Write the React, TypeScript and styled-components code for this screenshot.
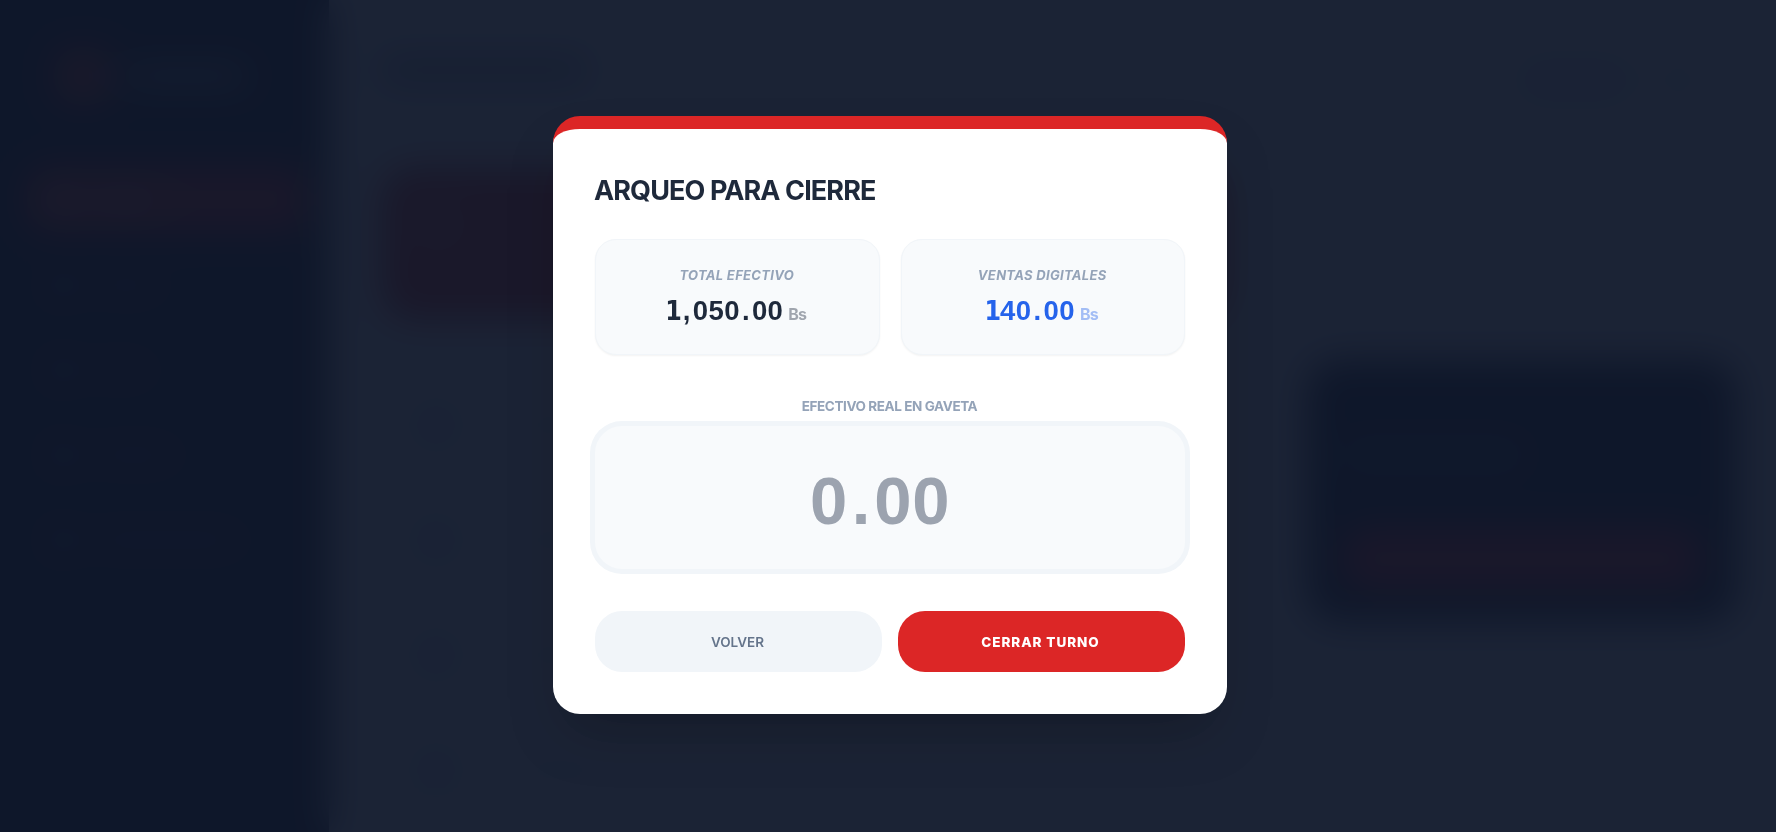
import React from "react";
import styled, { createGlobalStyle } from "styled-components";

const GlobalStyle = createGlobalStyle`
  * { box-sizing: border-box; }
  body { margin: 0; overflow: hidden; font-family: Inter, "Liberation Sans", sans-serif; }
  button, input { font-family: inherit; border: 0; margin: 0; }
`;

const Page = styled.div`
  position: relative;
  display: flex;
  width: 100vw;
  height: 100vh;
  overflow: hidden;
  background: #f8fafc;
`;

const Sidebar = styled.aside`
  display: flex;
  flex-direction: column;
  flex: none;
  width: 329px;
  padding: 49px 21px 0 27px;
  background: #0f172a;
`;

const Brand = styled.div`
  display: flex;
  align-items: center;
  gap: 16px;
  height: 54px;
  padding-left: 29px;
  margin-bottom: 64px;
`;

const BrandMark = styled.div`
  width: 54px;
  height: 54px;
  border-radius: 14px;
  background: #e23a3a;
`;

const Block = styled.div<{ $w: number; $h: number; $color: string; $round?: number }>`
  flex: none;
  width: ${(p) => p.$w}px;
  height: ${(p) => p.$h}px;
  border-radius: ${(p) => p.$round ?? 4}px;
  background: ${(p) => p.$color};
`;

const NavItem = styled.div<{ $active?: boolean }>`
  display: flex;
  align-items: center;
  gap: 18px;
  height: 65px;
  margin-bottom: 20px;
  padding-left: 22px;
  border-radius: 20px;
  background: ${(p) => (p.$active ? "#dc2626" : "transparent")};
`;

const Main = styled.main`
  display: flex;
  flex: 1;
  justify-content: space-between;
  padding: 56px 39px 0 53px;
`;

const Column = styled.section<{ $w: number }>`
  display: flex;
  flex-direction: column;
  flex: none;
  width: ${(p) => p.$w}px;
`;

const Hero = styled.div`
  flex: none;
  height: 152px;
  margin: 84px 0 47px;
  padding: 36px;
  border-radius: 30px;
  background: #dc2626;
`;

const Row = styled.div`
  display: flex;
  flex: none;
  align-items: center;
  gap: 54px;
  height: 115px;
  padding-left: 29px;
`;

const Session = styled.div`
  display: flex;
  justify-content: flex-end;
  gap: 20px;
  height: 60px;
  padding-right: 34px;
`;

const Summary = styled.div`
  display: flex;
  flex-direction: column;
  justify-content: space-between;
  height: 262px;
  margin-top: 244px;
  padding: 82px 36px 32px;
  border-radius: 32px;
  background: #0f172a;
`;

const Overlay = styled.div`
  position: absolute;
  inset: 0;
  display: flex;
  align-items: center;
  justify-content: center;
  padding: 0 0 2px 4px;
  background: rgba(15, 23, 42, 0.95);
  backdrop-filter: blur(18px);
`;

const Modal = styled.div`
  display: flex;
  flex-direction: column;
  width: 674px;
  height: 598px;
  padding: 41px 42px 42px;
  border-top: 13px solid #dc2626;
  border-radius: 27px;
  background: #fff;
  box-shadow: 0 28px 56px -13px rgba(0, 0, 0, 0.25);
`;

const Title = styled.h2`
  margin: 0 0 0 -1px;
  height: 42px;
  line-height: 42px;
  font-size: 27px;
  font-weight: 700;
  letter-spacing: -0.9px;
  color: #1e293b;
`;

const Stats = styled.div`
  display: grid;
  grid-template-columns: 1fr 1fr;
  gap: 21px;
  margin-top: 27px;
`;

const StatCard = styled.div`
  display: flex;
  flex-direction: column;
  align-items: center;
  height: 116px;
  padding: 26px 1px 0 0;
  border: 1px solid #f1f5f9;
  border-radius: 21px;
  background: #f8fafc;
  box-shadow: 0 1px 2px rgba(0, 0, 0, 0.05);
`;

const StatLabel = styled.div`
  height: 20px;
  line-height: 19px;
  font-size: 13px;
  font-weight: 700;
  font-style: italic;
  letter-spacing: 0.32px;
  color: #94a3b8;
`;

const Amount = styled.div<{ $color: string }>`
  display: flex;
  align-items: baseline;
  height: 34px;
  margin: 8px 2px 0 0;
  line-height: 34px;
  font-family: "Liberation Sans", Arial, sans-serif;
  font-size: 27.5px;
  font-weight: 700;
  letter-spacing: 0.4px;
  color: ${(p) => p.$color};
`;

const One = styled.span`
  font-family: "DejaVu Sans Condensed", "DejaVu Sans", sans-serif;
  font-stretch: condensed;
  font-size: 26.5px;
  letter-spacing: -1.1px;
`;

const Point = styled.span`
  padding: 0 2px;
`;

const Comma = styled.span`
  padding: 0 2px;
`;

const Currency = styled.span`
  margin-left: 5px;
  font-family: Inter, sans-serif;
  font-size: 16px;
  font-weight: 700;
  letter-spacing: -0.8px;
  opacity: 0.4;
`;

const FieldLabel = styled.label`
  height: 20px;
  margin: 41px 1px 0 0;
  line-height: 20px;
  font-size: 13.5px;
  font-weight: 700;
  letter-spacing: -0.4px;
  text-align: center;
  color: #94a3b8;
`;

const Field = styled.div`
  display: flex;
  align-items: center;
  justify-content: center;
  flex: none;
  height: 143px;
  margin-top: 10px;
  padding: 6px 20px 0 0;
  border-radius: 27px;
  background: #f8fafc;
  box-shadow: 0 0 0 5px #f1f5f9;
  font-family: "Liberation Sans", Arial, sans-serif;
  font-size: 67px;
  font-weight: 700;
  letter-spacing: 0.7px;
  color: #9ca3af;
`;

const FieldPoint = styled.span`
  padding: 0 3px 0 4px;
`;

const Actions = styled.div`
  display: grid;
  grid-template-columns: 1fr 1fr;
  gap: 16px;
  margin-top: 42px;
`;

const Button = styled.button<{ $primary?: boolean }>`
  height: 61px;
  padding: 0 2px 0 0;
  border-radius: 27px;
  font-size: 13.5px;
  font-weight: ${(p) => (p.$primary ? 800 : 600)};
  letter-spacing: ${(p) => (p.$primary ? 0.95 : 0)}px;
  color: ${(p) => (p.$primary ? "#fff" : "#64748b")};
  background: ${(p) => (p.$primary ? "#dc2626" : "#f1f5f9")};
`;

const navWidths = [70, 60, 85, 150];

export default function App() {
  return (
    <>
      <GlobalStyle />
      <Page>
        <Sidebar>
          <Brand>
            <BrandMark />
            <Block $w={120} $h={18} $color="#94a3b8" />
          </Brand>
          <NavItem $active>
            <Block $w={22} $h={22} $color="#f0a0a0" />
            <Block $w={70} $h={10} $color="#f0a0a0" />
          </NavItem>
          {navWidths.map((w) => (
            <NavItem key={w}>
              <Block $w={24} $h={22} $color="#475569" />
              <Block $w={w} $h={10} $color="#475569" />
            </NavItem>
          ))}
        </Sidebar>
        <Main>
          <Column $w={840}>
            <Block $w={205} $h={28} $color="#94a3b8" />
            <Hero>
              <Block $w={40} $h={40} $color="#ef6666" $round={12} />
            </Hero>
            {[0, 1, 2, 3].map((n) => (
              <Row key={n}>
                <Block $w={50} $h={50} $color="#dbe1e9" $round={18} />
                <Block $w={90} $h={12} $color="#cbd5e1" />
              </Row>
            ))}
          </Column>
          <Column $w={430}>
            <Session>
              <Block $w={120} $h={48} $color="#dde3eb" $round={20} />
              <Block $w={48} $h={48} $color="#e6ebf1" $round={18} />
            </Session>
            <Summary>
              <Block $w={180} $h={26} $color="#334155" />
              <Block $w={358} $h={62} $color="#dc2626" $round={22} />
            </Summary>
          </Column>
        </Main>
        <Overlay>
          <Modal role="dialog">
            <Title>ARQUEO PARA CIERRE</Title>
            <Stats>
              <StatCard>
                <StatLabel>TOTAL EFECTIVO</StatLabel>
                <Amount $color="#1e293b">
                  <One>1</One><Comma>,</Comma>050<Point>.</Point>00<Currency>Bs</Currency>
                </Amount>
              </StatCard>
              <StatCard>
                <StatLabel>VENTAS DIGITALES</StatLabel>
                <Amount $color="#2563eb">
                  <One>1</One>40<Point>.</Point>00<Currency>Bs</Currency>
                </Amount>
              </StatCard>
            </Stats>
            <FieldLabel>EFECTIVO REAL EN GAVETA</FieldLabel>
            <Field>
              0<FieldPoint>.</FieldPoint>00
            </Field>
            <Actions>
              <Button>VOLVER</Button>
              <Button $primary>CERRAR TURNO</Button>
            </Actions>
          </Modal>
        </Overlay>
      </Page>
    </>
  );
}
